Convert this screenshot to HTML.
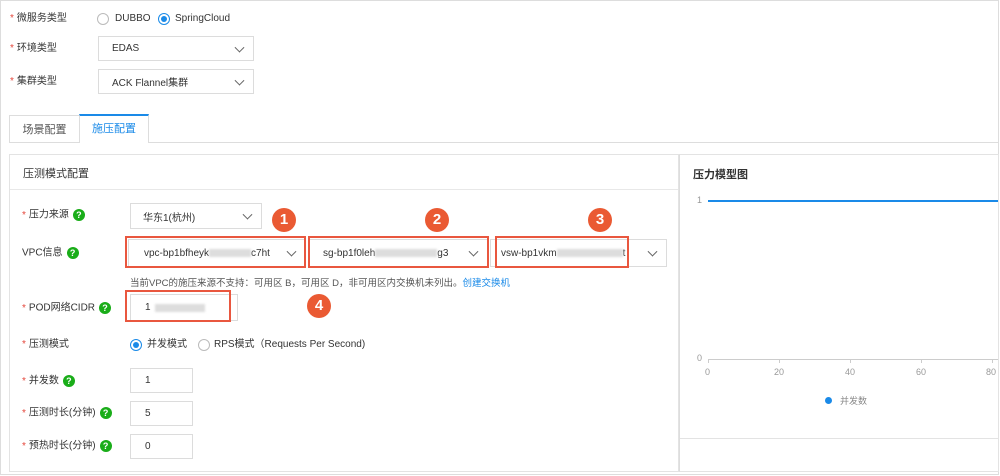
<!DOCTYPE html><html><head><meta charset="utf-8"><style>
*{margin:0;padding:0;box-sizing:border-box}
body{width:1000px;height:476px;position:relative;background:#fff;font-family:"Liberation Sans","Noto Sans CJK SC",sans-serif;font-size:10px;color:#333;overflow:hidden}
.a{position:absolute}
.lbl{position:absolute;font-size:10px;color:#333;line-height:12px}
.lbl b{color:#e5473c;font-weight:normal;margin-right:3px}
.sel{position:absolute;border:1px solid #dcdcdc;background:#fff;font-size:10px;color:#333;padding-left:14px;display:flex;align-items:center}
.sel:after{content:"";position:absolute;right:10px;top:50%;width:6px;height:6px;border-right:1px solid #666;border-bottom:1px solid #666;transform:translateY(-70%) rotate(45deg)}
.inp{position:absolute;border:1px solid #dcdcdc;background:#fff;padding-left:14px;display:flex;align-items:center;font-size:10px}
.q{display:inline-block;width:12px;height:12px;border-radius:50%;background:#1aad19;color:#fff;font-size:9px;font-weight:bold;text-align:center;line-height:12px;vertical-align:middle;margin-left:4px}
.rd{position:absolute;width:12px;height:12px;border-radius:50%;border:1px solid #bbb;background:#fff}
.rd.on{border-color:#1a8ae8}
.rd.on:after{content:"";position:absolute;left:2px;top:2px;width:6px;height:6px;border-radius:50%;background:#1a8ae8}
.red{position:absolute;border:2px solid #e9573f}
.num{position:absolute;width:24px;height:24px;border-radius:50%;background:#ea5a33;color:#fff;font-weight:bold;font-size:15px;text-align:center;line-height:24px}
.blur{display:inline-block;background:#ddd;height:8px;vertical-align:middle;filter:blur(1px)}
.ax{position:absolute;font-size:9px;color:#999}
</style></head><body>
<div class="a" style="left:0;top:0;width:999px;height:475px;border:1px solid #ddd"></div>

<div class="lbl" style="left:10px;top:13px"><b>*</b>微服务类型</div>
<div class="rd" style="left:97px;top:13px"></div><div class="lbl" style="left:115px;top:13px">DUBBO</div>
<div class="rd on" style="left:158px;top:13px"></div><div class="lbl" style="left:175px;top:13px">SpringCloud</div>

<div class="lbl" style="left:10px;top:43px"><b>*</b>环境类型</div>
<div class="sel" style="left:98px;top:36px;width:156px;height:25px;padding-left:13px">EDAS</div>
<div class="lbl" style="left:10px;top:76px"><b>*</b>集群类型</div>
<div class="sel" style="left:98px;top:69px;width:156px;height:25px;padding-left:13px">ACK Flannel集群</div>

<div class="a" style="left:9px;top:142px;width:990px;border-top:1px solid #ddd"></div>
<div class="a" style="left:9px;top:115px;width:71px;height:28px;border:1px solid #ddd;border-bottom:none;font-size:11px;color:#555;text-align:center;line-height:28px">场景配置</div>
<div class="a" style="left:79px;top:114px;width:70px;height:29px;border:1px solid #ddd;border-top:2px solid #1a8ae8;border-bottom:none;background:#fff;font-size:11px;color:#1a8ae8;text-align:center;line-height:27px">施压配置</div>

<div class="a" style="left:9px;top:154px;width:670px;height:318px;border:1px solid #e3e3e3"></div>
<div class="a" style="left:10px;top:189px;width:668px;border-top:1px solid #e8e8e8"></div>
<div class="a" style="left:23px;top:165px;font-size:11px;color:#333">压测模式配置</div>

<div class="a" style="left:679px;top:154px;width:320px;height:318px;border:1px solid #e3e3e3;border-left:1px solid #ddd"></div>
<div class="a" style="left:680px;top:438px;width:318px;border-top:1px solid #e3e3e3"></div>
<div class="a" style="left:693px;top:166px;font-size:11px;font-weight:bold;color:#333">压力模型图</div>
<div class="ax" style="left:697px;top:195px">1</div>
<div class="a" style="left:708px;top:200px;width:290px;height:2px;background:#1a8ae8"></div>
<div class="ax" style="left:697px;top:353px">0</div>
<div class="a" style="left:708px;top:359px;width:290px;border-top:1px solid #ccc"></div>
<div class="a" style="left:708px;top:359px;height:4px;border-left:1px solid #ccc"></div>
<div class="a" style="left:779px;top:359px;height:4px;border-left:1px solid #ccc"></div>
<div class="a" style="left:850px;top:359px;height:4px;border-left:1px solid #ccc"></div>
<div class="a" style="left:921px;top:359px;height:4px;border-left:1px solid #ccc"></div>
<div class="a" style="left:992px;top:359px;height:4px;border-left:1px solid #ccc"></div>
<div class="ax" style="left:705px;top:367px">0</div>
<div class="ax" style="left:774px;top:367px">20</div>
<div class="ax" style="left:845px;top:367px">40</div>
<div class="ax" style="left:916px;top:367px">60</div>
<div class="ax" style="left:986px;top:367px">80</div>
<div class="a" style="left:825px;top:397px;width:7px;height:7px;border-radius:50%;background:#1a8ae8"></div>
<div class="ax" style="left:840px;top:394px;color:#888">并发数</div>

<div class="lbl" style="left:22px;top:209px"><b>*</b>压力来源<span class="q">?</span></div>
<div class="sel" style="left:130px;top:203px;width:132px;height:26px;padding-left:12px">华东1(杭州)</div>

<div class="lbl" style="left:22px;top:247px">VPC信息<span class="q">?</span></div>
<div class="sel" style="left:128px;top:239px;width:178px;height:28px;padding-left:15px">vpc-bp1bfheyk<span class="blur" style="width:42px"></span>c7ht</div>
<div class="sel" style="left:308px;top:239px;width:180px;height:28px;padding-left:14px">sg-bp1f0leh<span class="blur" style="width:62px"></span>g3</div>
<div class="sel" style="left:490px;top:239px;width:177px;height:28px;padding-left:10px">vsw-bp1vkm<span class="blur" style="width:66px"></span>t</div>
<div class="red" style="left:125px;top:236px;width:181px;height:32px"></div>
<div class="red" style="left:308px;top:236px;width:181px;height:32px"></div>
<div class="red" style="left:495px;top:236px;width:134px;height:32px"></div>
<div class="num" style="left:272px;top:208px">1</div>
<div class="num" style="left:425px;top:208px">2</div>
<div class="num" style="left:588px;top:208px">3</div>
<div class="num" style="left:307px;top:294px">4</div>
<div class="a" style="left:130px;top:275px;font-size:9.5px;color:#555">当前VPC的施压来源不支持：可用区 B，可用区 D，非可用区内交换机未列出。<span style="color:#1a8ae8">创建交换机</span></div>

<div class="lbl" style="left:22px;top:302px"><b>*</b>POD网络CIDR<span class="q">?</span></div>
<div class="inp" style="left:130px;top:294px;width:108px;height:27px;padding-left:14px;line-height:12px">1<span class="blur" style="width:50px;margin-left:4px"></span></div>
<div class="red" style="left:125px;top:290px;width:106px;height:32px"></div>

<div class="lbl" style="left:22px;top:339px"><b>*</b>压测模式</div>
<div class="rd on" style="left:130px;top:339px"></div><div class="lbl" style="left:147px;top:339px">并发模式</div>
<div class="rd" style="left:198px;top:339px"></div><div class="lbl" style="left:214px;top:339px">RPS模式（Requests Per Second)</div>

<div class="lbl" style="left:22px;top:375px"><b>*</b>并发数<span class="q">?</span></div>
<div class="inp" style="left:130px;top:368px;width:63px;height:25px;padding-left:14px">1</div>
<div class="lbl" style="left:22px;top:407px"><b>*</b>压测时长(分钟)<span class="q">?</span></div>
<div class="inp" style="left:130px;top:401px;width:63px;height:25px;padding-left:14px">5</div>
<div class="lbl" style="left:22px;top:440px"><b>*</b>预热时长(分钟)<span class="q">?</span></div>
<div class="inp" style="left:130px;top:434px;width:63px;height:25px;padding-left:14px">0</div>
</body></html>
